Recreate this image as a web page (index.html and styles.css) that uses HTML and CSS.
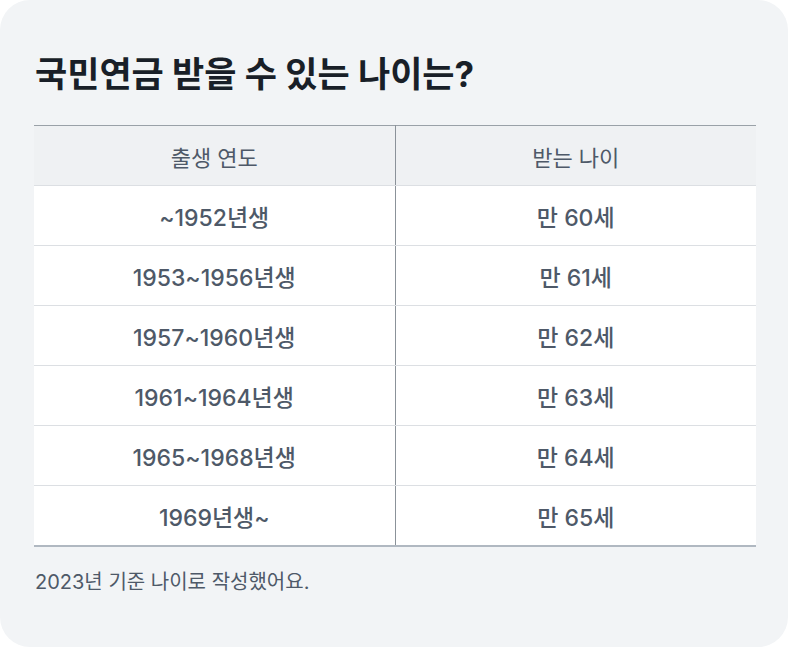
FILE: index.html
```html
<!DOCTYPE html>
<html lang="ko">
<head>
<meta charset="utf-8">
<link rel="stylesheet" href="styles.css">
</head>
<body>
<div class="card">
  <h1 class="title">국민연금 받을 수 있는 나이는?</h1>
  <table class="ages">
    <thead>
      <tr><th>출생 연도</th><th>받는 나이</th></tr>
    </thead>
    <tbody>
      <tr><td>~1952년생</td><td>만 60세</td></tr>
      <tr><td>1953~1956년생</td><td>만 61세</td></tr>
      <tr><td>1957~1960년생</td><td>만 62세</td></tr>
      <tr><td>1961~1964년생</td><td>만 63세</td></tr>
      <tr><td>1965~1968년생</td><td>만 64세</td></tr>
      <tr><td>1969년생~</td><td>만 65세</td></tr>
    </tbody>
  </table>
  <p class="note">2023년 기준 나이로 작성했어요.</p>
</div>
</body>
</html>
```
FILE: styles.css
```css
html, body {
  margin: 0;
  padding: 0;
  background: #ffffff;
}
body {
  font-family: Inter, "Noto Sans CJK KR", sans-serif;
  color: #4e5968;
}
.card {
  width: 788px;
  height: 647px;
  box-sizing: border-box;
  background: #f2f4f6;
  border-radius: 30px;
  padding: 51px 34px 0 34px;
}
.title {
  margin: 0 0 28px 1px;
  font-size: 35px;
  line-height: 46px;
  font-weight: 700;
  color: #191f28;
  letter-spacing: 0;
}
.ages {
  width: 722px;
  border-collapse: collapse;
  border-top: 1px solid #9aa1a8;
  border-bottom: 2px solid #b0b8c1;
  table-layout: fixed;
}
.ages th, .ages td {
  height: 59px;
  padding: 0;
  text-align: center;
  vertical-align: middle;
}
.ages th {
  background: #eff1f3;
  font-size: 22px;
  font-weight: 400;
  color: #4e5968;
  border-bottom: 1px solid #dcdfe3;
}
.ages td {
  background: #ffffff;
  font-size: 23px;
  font-weight: 500;
  color: #4e5968;
  border-bottom: 1px solid #dcdfe3;
}
.ages th:first-child, .ages td:first-child {
  border-right: 1px solid #8b9299;
}
.ages tr:last-child td {
  border-bottom: none;
}
.note {
  margin: 20px 0 0 1px;
  font-size: 20px;
  line-height: 30px;
  color: #4e5968;
}
```
